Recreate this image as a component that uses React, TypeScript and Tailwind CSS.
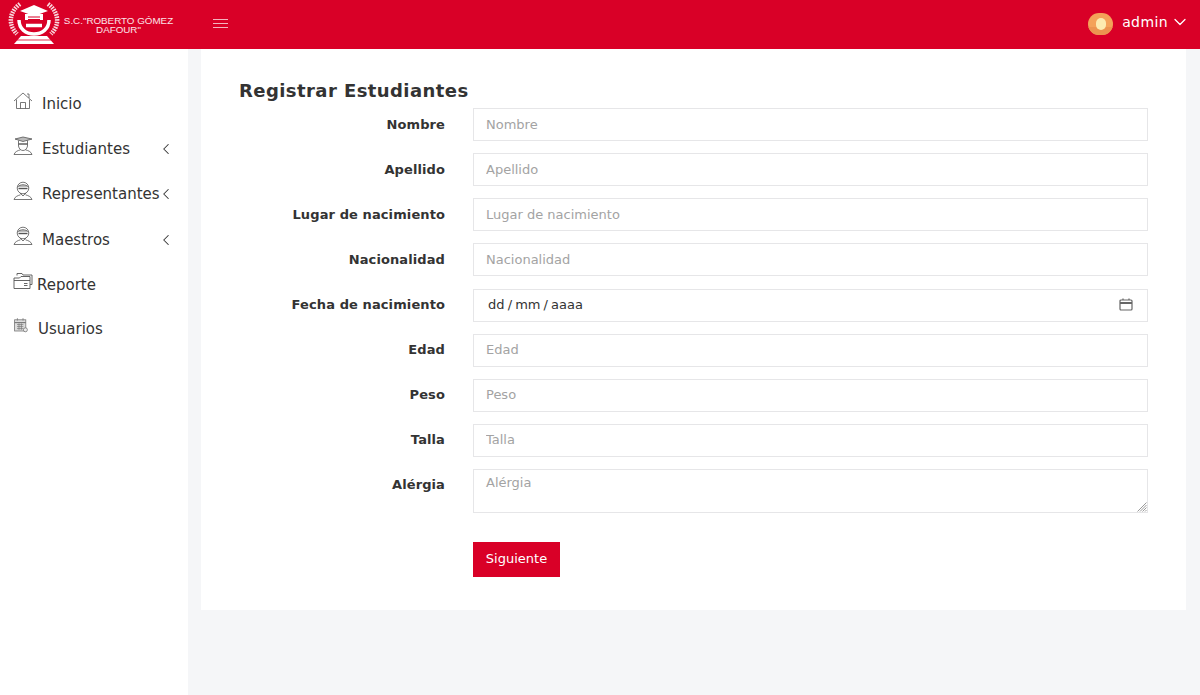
import { ChevronDown, ChevronLeft } from "lucide-react";

const fields = ["Nombre", "Apellido", "Lugar de nacimiento", "Nacionalidad"];
const fieldsAfter = ["Edad", "Peso", "Talla"];

function HomeIcon() {
  return (
    <svg width="20" height="20" viewBox="0 0 20 20" fill="none" stroke="#555" strokeWidth="0.8">
      <path d="M1 10 L10 2 L19 10" />
      <path d="M3.5 8.5 V17.5 H16.5 V8.5" />
      <path d="M7.5 17.5 V11.5 H12.5 V17.5" />
      <path d="M14 3 H16 V7" />
    </svg>
  );
}

function PersonIcon({ cap }: { cap?: boolean }) {
  return (
    <svg width="20" height="20" viewBox="0 0 20 20" fill="none" stroke="#555" strokeWidth="0.8">
      {cap ? (
        <>
          <path d="M2 3 L10 1 L19 3 L10 5.5 Z" fill="#bbb" />
          <path d="M5.5 4.5 V10 C6 13 8 14.5 10 14.5 C12 14.5 14 13 14.5 10 V4.5" />
          <path d="M5.5 8 H14.5" strokeWidth="1.4" />
        </>
      ) : (
        <>
          <circle cx="10" cy="7" r="5.8" />
          <path d="M4.6 6 C7 3 13 3 15.4 6" fill="#bbb" />
          <path d="M5.5 7.5 H14.5" strokeWidth="1.4" />
          <path d="M7 12 L10 15 L13 12" />
        </>
      )}
      <path d="M1 18.5 C2 15.5 5 14.5 7.5 13.8 M19 18.5 C18 15.5 15 14.5 12.5 13.8 M1 18.5 H19" />
    </svg>
  );
}

function FolderIcon() {
  return (
    <svg width="20" height="20" viewBox="0 0 20 20" fill="none" stroke="#555" strokeWidth="0.9">
      <path d="M4 4.5 V2.5 H9 L10 4 H19 V13.5 H17" />
      <path d="M1 7 V17.5 H17 V5.5 H8 L6.5 7 Z" />
      <path d="M1 9.5 H17" />
      <path d="M11 12.5 H14.5 M11 14.5 H14.5" />
    </svg>
  );
}

function CalendarIcon() {
  return (
    <svg width="16" height="16" viewBox="0 0 20 20" fill="none" stroke="#777" strokeWidth="1">
      <rect x="2" y="3.5" width="14" height="14" fill="#ddd" />
      <path d="M2 7 H16" strokeWidth="1.4" />
      <path d="M5 9.5 H13 M5 12 H13 M5 14.5 H13 M7.5 8 V16 M10.5 8 V16" strokeWidth="0.9" />
      <path d="M5.5 1.5 V4.5 M12.5 1.5 V4.5" />
      <circle cx="15.5" cy="16" r="2.5" fill="#eee" />
    </svg>
  );
}

function Logo() {
  return (
    <svg width="52" height="44" viewBox="0 0 52 44" fill="none" className="shrink-0">
      {/* laureles */}
      <path d="M12 2 C2 9 -1 22 9 32" stroke="#fff" strokeWidth="4.5" strokeDasharray="1.6 1" opacity="0.85" />
      <path d="M40 2 C50 9 53 22 43 32" stroke="#fff" strokeWidth="4.5" strokeDasharray="1.6 1" opacity="0.85" />
      {/* birrete */}
      <path d="M26 3 L40 9 L26 14 L12 9 Z" fill="#fff" />
      <path d="M17 12 V18 H35 V12" fill="#fff" />
      <path d="M20 15 H32 M20 17.5 H32" stroke="#d90027" strokeWidth="1" />
      {/* letra */}
      <path d="M41 18 C41 27 34 32 26 32 C18 32 11 27 11 18" stroke="#fff" strokeWidth="3.5" />
      <path d="M18 23.5 H34" stroke="#fff" strokeWidth="3.5" />
      {/* base */}
      <path d="M13 34 H39 L46 42 H6 Z" fill="#fff" />
      <path d="M9 38 H43" stroke="#d90027" strokeWidth="0.8" />
    </svg>
  );
}

function MenuItem({ icon, label, arrow, gap, rowClass }: { icon: React.ReactNode; label: string; arrow?: boolean; gap: string; rowClass: string }) {
  return (
    <div className={`flex items-center pl-[13px] pr-4 text-[15px] text-[#333] ${rowClass}`}>
      <span className="-mt-2 shrink-0">{icon}</span>
      <span className={gap}>{label}</span>
      {arrow && (
        <span className="ml-auto -mt-px flex w-3 shrink-0 justify-center">
          <ChevronLeft className="shrink-0" size={18} strokeWidth={1.4} />
        </span>
      )}
    </div>
  );
}

function FieldRow({ label, children, shifted }: { label: string; children: React.ReactNode; shifted?: boolean }) {
  return (
    <div className="flex gap-7">
      <label className={`w-[206px] shrink-0 text-right text-[13px] leading-[18px] font-bold tracking-[0.1px] text-[#333] ${shifted ? "pt-[7px]" : "pt-[8px]"}`}>{label}</label>
      <div className="flex-1">{children}</div>
    </div>
  );
}

const inputClass =
  "block h-[33px] w-full border border-[#e6e6e8] bg-white px-3 text-[13px] text-[#333] outline-none placeholder:text-[#a3a3a3]";

export default function App() {
  return (
    <div className="flex h-[695px] flex-col overflow-hidden bg-[#f5f6f8] font-['DejaVu_Sans',sans-serif]">
      {/* Header */}
      <header className="flex h-[49px] shrink-0 items-center bg-[#d90027] pr-[10px] pb-[2px] pl-[8px] text-white">
        <Logo />
        <div className="ml-[2px] w-[113px] shrink-0 pt-[2px] text-center font-['Liberation_Sans',sans-serif] text-[9.8px] leading-[9px] text-white/90">
          S.C."ROBERTO GÓMEZ DAFOUR"
        </div>
        <div className="ml-[38px] flex w-[15px] flex-col gap-[3px]">
          <span className="h-px bg-white/70" />
          <span className="h-px bg-white/70" />
          <span className="h-px bg-white/70" />
        </div>
        <div className="ml-auto flex items-center">
          <div className="relative flex h-[22px] w-[25px] items-center justify-center overflow-hidden rounded-full bg-[#f4a259]">
            <span className="absolute inset-x-0 bottom-0 h-[8px] bg-[#ec9450]" />
            <span className="relative h-[12px] w-[10px] rounded-full bg-[#fdebb0]" />
          </div>
          <span className="ml-[9px] -mt-[3px] text-sm tracking-[0.4px]">admin</span>
          <ChevronDown className="ml-[2px] -mt-[3px]" size={20} strokeWidth={1.5} />
        </div>
      </header>

      <div className="flex flex-1">
        {/* Sidebar */}
        <aside className="w-[188px] shrink-0 bg-white pt-[33px]">
          <MenuItem icon={<HomeIcon />} label="Inicio" gap="ml-[9px]" rowClass="h-[45px]" />
          <MenuItem icon={<PersonIcon cap />} label="Estudiantes" arrow gap="ml-[9px]" rowClass="h-[45px]" />
          <MenuItem icon={<PersonIcon />} label="Representantes" arrow gap="ml-[9px]" rowClass="h-[45px]" />
          <MenuItem icon={<PersonIcon />} label="Maestros" arrow gap="ml-[9px]" rowClass="h-[46px]" />
          <MenuItem icon={<FolderIcon />} label="Reporte" gap="ml-[4px]" rowClass="h-[44px]" />
          <MenuItem icon={<CalendarIcon />} label="Usuarios" gap="ml-[9px]" rowClass="h-[44px]" />
        </aside>

        {/* Content */}
        <main className="flex-1 px-[13px]">
          <section className="h-[561px] w-[985px] bg-white px-[38px] pt-[30px]">
            <h1 className="h-[29px] text-lg leading-[24px] font-bold tracking-[0.43px] text-[#333]">Registrar Estudiantes</h1>
            <div className="flex flex-col gap-3">
              {fields.map((f) => (
                <FieldRow key={f} label={f}>
                  <input className={inputClass} placeholder={f} />
                </FieldRow>
              ))}
              <div className="mt-px">
                <FieldRow label="Fecha de nacimiento" shifted>
                  <div className="flex h-[33px] items-center justify-between border border-[#e6e6e8] px-[14px] pb-[2px] text-[13px] text-[#333] [word-spacing:-1px]">
                    <span>dd / mm / aaaa</span>
                    <svg width="14" height="13" viewBox="0 0 14 13" fill="none" stroke="#666" strokeWidth="1.2">
                      <rect x="1" y="2" width="12" height="10" rx="1" />
                      <path d="M1 5 H13" strokeWidth="2" />
                      <path d="M4 0.5 V2 M10 0.5 V2" />
                    </svg>
                  </div>
                </FieldRow>
              </div>
              {fieldsAfter.map((f) => (
                <FieldRow key={f} label={f} shifted>
                  <input className={`${inputClass} pb-[2px]`} placeholder={f} />
                </FieldRow>
              ))}
              <FieldRow label="Alérgia" shifted>
                <div className="relative">
                  <textarea
                    className="block h-[44px] w-full resize-none border border-[#e6e6e8] bg-white px-3 pt-[3px] text-[13px] text-[#333] outline-none placeholder:text-[#a3a3a3]"
                    placeholder="Alérgia"
                  />
                  {/* resize handle */}
                  <svg className="absolute right-px bottom-px" width="10" height="10" viewBox="0 0 10 10" stroke="#9a9a9a" strokeWidth="1">
                    <path d="M0.5 9.5 L9.5 0.5 M3 9.5 L9.5 3 M5.5 9.5 L9.5 5.5 M8 9.5 L9.5 8" />
                  </svg>
                </div>
              </FieldRow>
              <div className="mt-[17px] ml-[234px]">
                <button className="h-[35px] w-[87px] bg-[#d90027] pb-[2px] text-[13px] text-white">Siguiente</button>
              </div>
            </div>
          </section>
        </main>
      </div>
    </div>
  );
}
